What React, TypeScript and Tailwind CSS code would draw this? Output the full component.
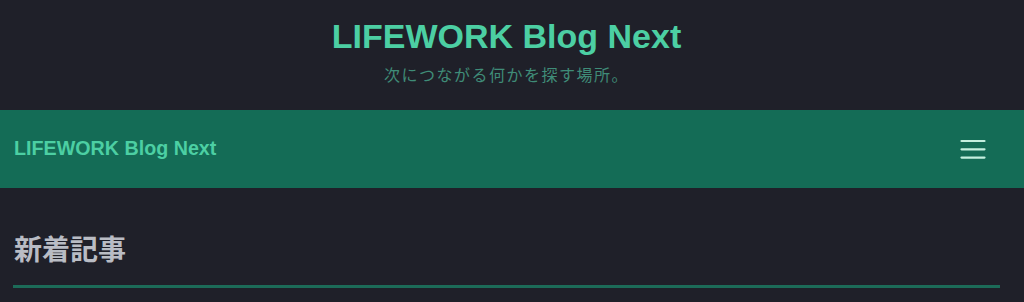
const font = { fontFamily: '"Liberation Sans", Arial, "Noto Sans CJK JP", sans-serif' }
const jp = { fontFamily: '"Noto Sans CJK JP", sans-serif' }

const App = () => {
    return (
        <div className="min-h-[302px] w-full bg-[#1f2029] overflow-hidden" style={font}>
            <header className="flex flex-col items-center pt-[16px] pr-[11px] h-[110px]">
                <h1 className="text-[34px] font-bold leading-[40px] text-[#4ccfa3]">LIFEWORK Blog Next</h1>
                <p className="mt-[6px] text-[16px] leading-[24px] tracking-[1.5px] text-[#3f8c78]" style={jp}>
                    次につながる何かを探す場所。
                </p>
            </header>
            <nav className="flex items-center justify-between h-[78px] bg-[#146c56] pl-[14px] pr-[38px]">
                <span className="text-[19.7px] font-bold text-[#4ccfa3]">LIFEWORK Blog Next</span>
                <button className="flex items-center">
                    <svg width="26" height="20" viewBox="0 0 26 20" fill="none" stroke="#c4efdf" strokeWidth="2.2" strokeLinecap="round">
                        <line x1="1.5" y1="2" x2="24.5" y2="2" />
                        <line x1="1.5" y1="10.3" x2="24.5" y2="10.3" />
                        <line x1="1.5" y1="18.6" x2="24.5" y2="18.6" />
                    </svg>
                </button>
            </nav>
            <main className="pl-[13px] pr-[24px] pt-[40px]">
                <h2 className="text-[28px] font-bold leading-[40px] text-[#b9bcc4] pl-[1px]" style={jp}>
                    新着記事
                </h2>
                <div className="mt-[17px] h-[3px] bg-[#1c6b58]" />
            </main>
        </div>
    )
}

export default App
